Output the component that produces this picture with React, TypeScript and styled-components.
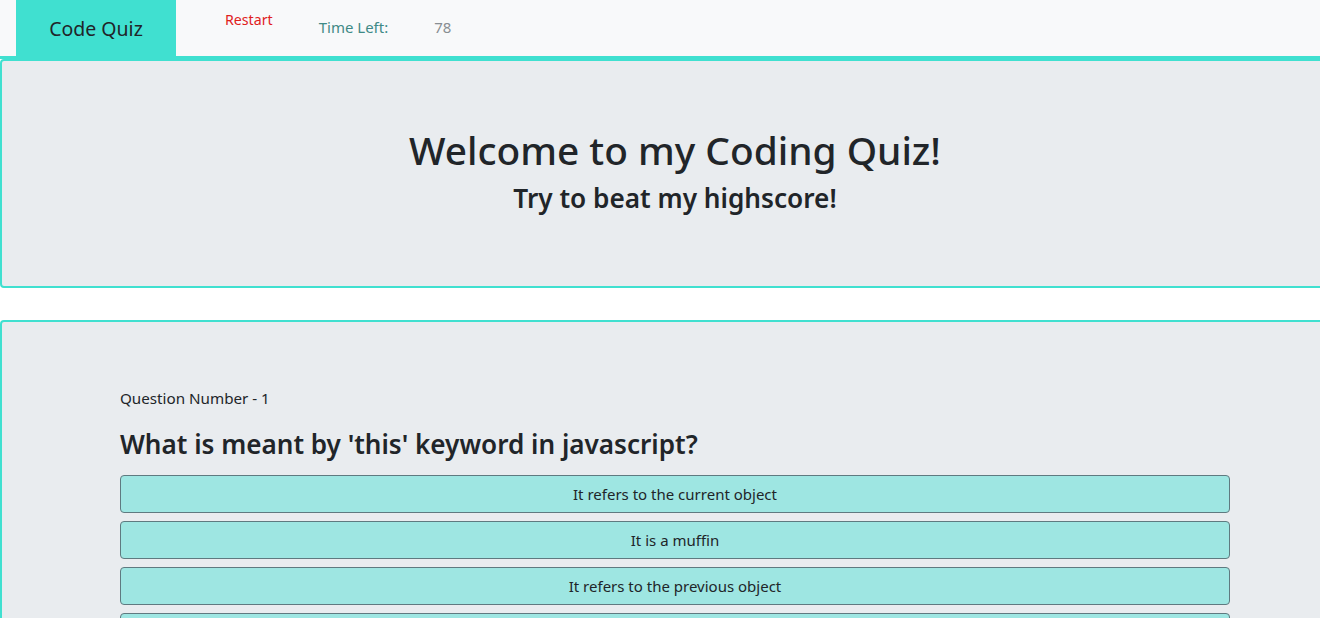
import React from "react";
import styled, { createGlobalStyle } from "styled-components";

const Global = createGlobalStyle`
  html, body { margin: 0; padding: 0; overflow-x: hidden; background: #fff; }
  body { font-family: "Noto Sans", "Open Sans", sans-serif; color: #212529; }
  * { box-sizing: border-box; }
`;

const Page = styled.div`
  width: 1350px;
`;

const Nav = styled.nav`
  height: 59px;
  background: #f8f9fa;
  border-bottom: 3px solid #40e0d0;
  display: flex;
  align-items: stretch;
  padding-left: 16px;
`;

const Brand = styled.div`
  width: 160px;
  background: #40e0d0;
  display: flex;
  align-items: center;
  justify-content: center;
  font-size: 19.5px;
  color: #212529;
`;

const NavLink = styled.span<{ $color: string; $top: number; $ml: number; $fs: number }>`
  margin-left: ${(p) => p.$ml}px;
  padding-top: ${(p) => p.$top}px;
  font-size: ${(p) => p.$fs}px;
  color: ${(p) => p.$color};
`;

const Card = styled.section<{ $h: number; $mt: number }>`
  margin-top: ${(p) => p.$mt}px;
  height: ${(p) => p.$h}px;
  background: #e9ecef;
  border: 2px solid #40e0d0;
  border-radius: 4px;
`;

const Hero = styled(Card)`
  display: flex;
  flex-direction: column;
  align-items: center;
  padding-top: 65px;
`;

const Title = styled.h1`
  margin: 0;
  font-size: 38.8px;
  font-weight: 500;
  line-height: 48px;
`;

const Sub = styled.h2`
  margin: 0;
  font-size: 26.2px;
  font-weight: 600;
  line-height: 34px;
  margin-top: 7px;
`;

const Quiz = styled(Card)`
  padding: 65px 118px 0 118px;
  display: flex;
  flex-direction: column;
`;

const QNum = styled.p`
  margin: 0;
  font-size: 15.2px;
  line-height: 22px;
`;

const QText = styled.h3`
  margin: 18px 0 14px;
  font-size: 26.1px;
  font-weight: 600;
  line-height: 34px;
`;

const Answers = styled.div`
  display: flex;
  flex-direction: column;
  gap: 8px;
`;

const Answer = styled.button`
  height: 38px;
  width: 1110px;
  background: #9ee6e2;
  border: 1px solid #5f7a80;
  border-radius: 4px;
  font-family: inherit;
  font-size: 15px;
  color: #212529;
  cursor: pointer;
`;

const answers = [
  "It refers to the current object",
  "It is a muffin",
  "It refers to the previous object",
  "It is a variable which contains value",
];

export default function App() {
  return (
    <Page>
      <Global />
      <Nav>
        <Brand>Code Quiz</Brand>
        <NavLink $color="#e0201c" $top={10} $ml={49} $fs={14.2}>Restart</NavLink>
        <NavLink $color="#3f8a86" $top={17} $ml={46} $fs={15}>Time Left:</NavLink>
        <NavLink $color="#888e92" $top={17} $ml={46} $fs={15}>78</NavLink>
      </Nav>
      <Hero as="header" $h={229} $mt={0}>
        <Title>Welcome to my Coding Quiz!</Title>
        <Sub>Try to beat my highscore!</Sub>
      </Hero>
      <Quiz $h={400} $mt={32}>
        <QNum>Question Number - 1</QNum>
        <QText>What is meant by 'this' keyword in javascript?</QText>
        <Answers>
          {answers.map((a) => (
            <Answer key={a}>{a}</Answer>
          ))}
        </Answers>
      </Quiz>
    </Page>
  );
}
